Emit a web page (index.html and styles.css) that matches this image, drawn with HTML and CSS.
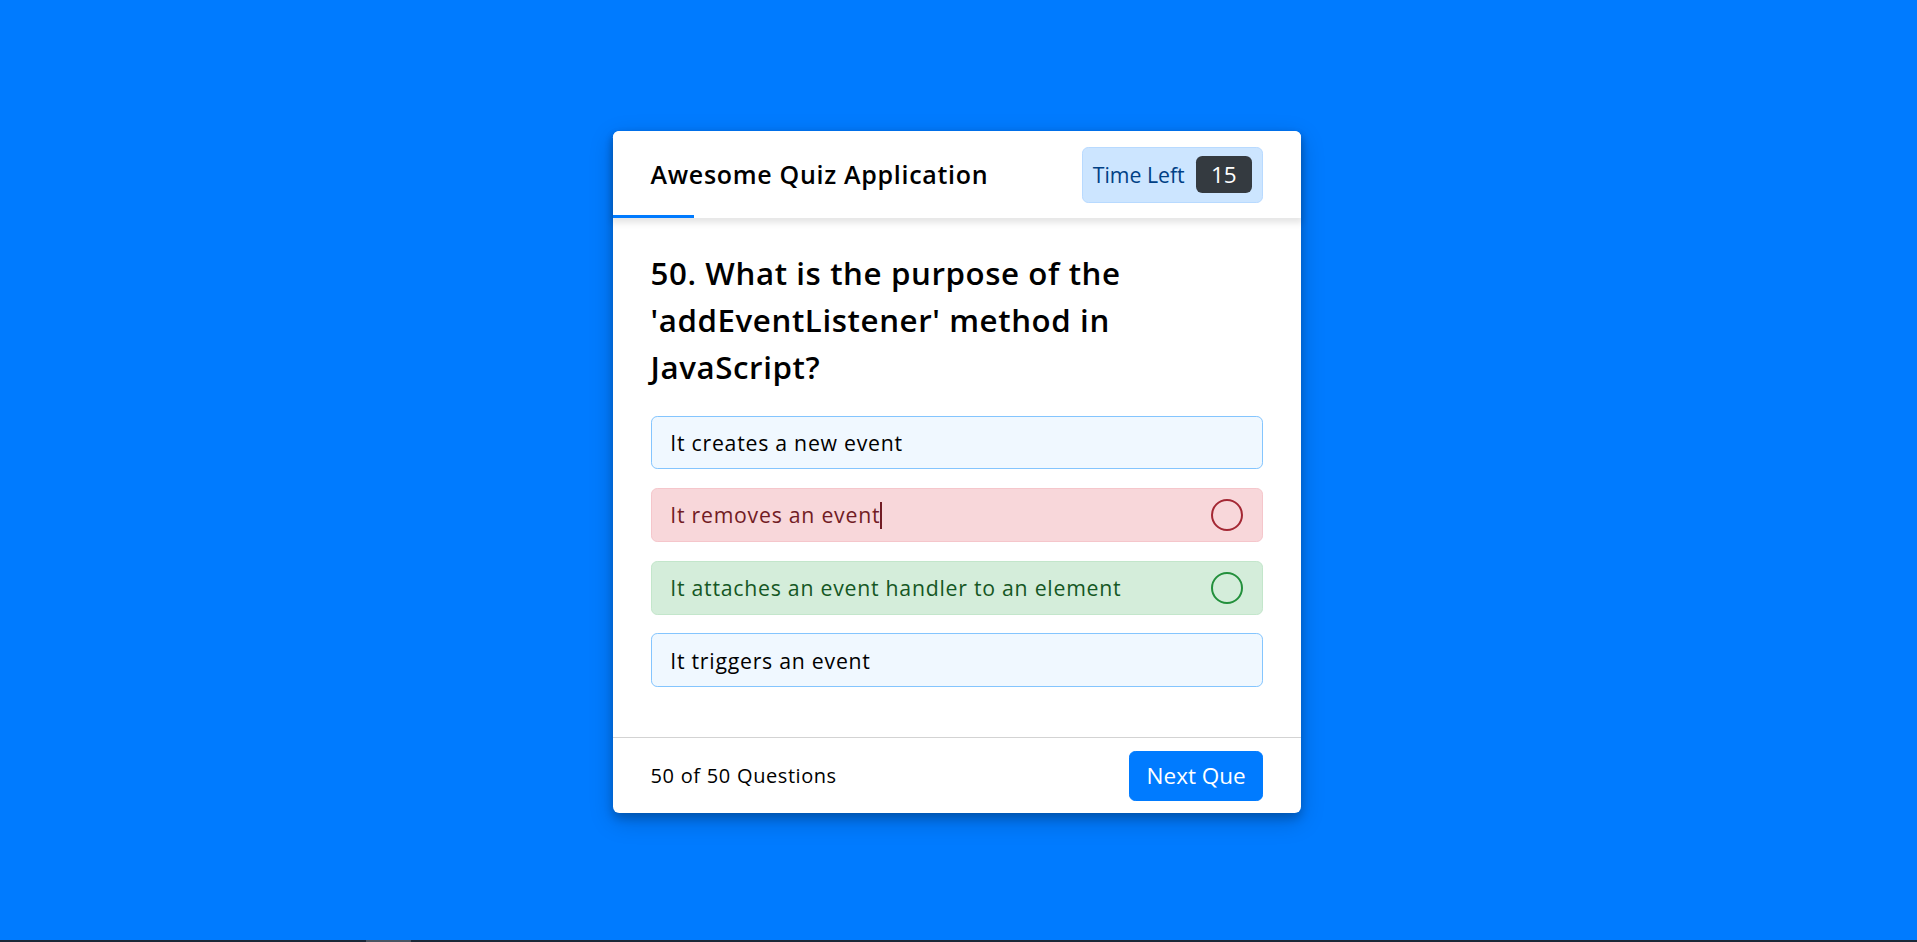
FILE: index.html
```html
<!DOCTYPE html>
<html lang="en">
<head>
<meta charset="utf-8">
<title>Awesome Quiz Application</title>
<link rel="stylesheet" href="styles.css">
</head>
<body>
<div class="quiz-box">
  <header class="quiz-header">
    <div class="title">Awesome Quiz Application</div>
    <div class="timer">
      <div class="time-left-txt">Time Left</div>
      <div class="timer-sec">15</div>
    </div>
    <div class="time-line"></div>
  </header>
  <section class="quiz-body">
    <div class="que-text">50. What is the purpose of the<br>'addEventListener' method in<br>JavaScript?</div>
    <div class="option-list">
      <div class="option"><span>It creates a new event</span></div>
      <div class="option incorrect"><span>It removes an event<span class="caret"></span></span><div class="icon cross"></div></div>
      <div class="option correct"><span>It attaches an event handler to an element</span><div class="icon tick"></div></div>
      <div class="option"><span>It triggers an event</span></div>
    </div>
  </section>
  <footer class="quiz-footer">
    <div class="total-que"><p>50</p>of<p>50</p>Questions</div>
    <button class="next-btn">Next Que</button>
  </footer>
</div>
<div class="bottom-strip"><div class="strip-thumb"></div></div>
</body>
</html>
```

FILE: styles.css
```css
* {
  box-sizing: border-box;
  margin: 0;
  padding: 0;
}

html, body {
  height: 100%;
}

body {
  background: #007bff;
  font-family: "Open Sans", "Noto Sans", "DejaVu Sans", sans-serif;
  line-height: 1.5;
  color: #000;
  display: flex;
  align-items: center;
  justify-content: center;
  padding: 2px 3.5px 0 0;
  overflow: hidden;
}

.quiz-box {
  width: 687.5px;
  background: #fff;
  border-radius: 6.25px;
  box-shadow: 0 5px 10px 0 rgba(0, 0, 0, 0.2), 0 7.5px 25px 0 rgba(0, 0, 0, 0.19);
}

.quiz-header {
  position: relative;
  z-index: 2;
  height: 87.5px;
  padding: 0 37.5px;
  display: flex;
  align-items: center;
  justify-content: space-between;
  border-radius: 6.25px 6.25px 0 0;
  box-shadow: 0 3.75px 6.25px 1.25px rgba(0, 0, 0, 0.1);
  background: #fff;
}

.title {
  font-size: 25px;
  font-weight: 600;
  letter-spacing: 0.7px;
}

.timer {
  width: 181.25px;
  height: 56.25px;
  background: #cce5ff;
  border: 1.25px solid #b8daff;
  border-radius: 6.25px;
  padding: 0 10px;
  display: flex;
  align-items: center;
  justify-content: space-between;
  color: #004085;
}

.time-left-txt {
  font-size: 21.25px;
  font-weight: 400;
}

.timer-sec {
  width: 56.25px;
  height: 37.5px;
  line-height: 37.5px;
  font-size: 22.5px;
  font-weight: 500;
  text-align: center;
  color: #fff;
  background: #343a40;
  border-radius: 6.25px;
}

.time-line {
  position: absolute;
  left: 0;
  bottom: 0;
  width: 81px;
  height: 3.75px;
  background: #007bff;
}

.quiz-body {
  padding: 31.25px 37.5px 25px;
}

.que-text {
  font-size: 31.25px;
  font-weight: 600;
  line-height: 47px;
  letter-spacing: 0.6px;
}

.option-list {
  padding: 25px 0;
  display: flex;
  flex-direction: column;
  gap: 18.75px;
}

.option {
  display: flex;
  align-items: center;
  justify-content: space-between;
  background: aliceblue;
  border: 1.25px solid #84c5fe;
  border-radius: 6.25px;
  padding: 10px 18.75px;
  font-size: 21.25px;
  line-height: 31px;
  letter-spacing: 0.75px;
  min-height: 53.5px;
}

.option.incorrect {
  color: #721c24;
  background: #f8d7da;
  border-color: #f5c6cb;
}

.option.correct {
  color: #155724;
  background: #d4edda;
  border-color: #c3e6cb;
}

.caret {
  display: inline-block;
  width: 2px;
  height: 27px;
  background: #721c24;
  vertical-align: -6px;
}

.icon {
  width: 32px;
  height: 32px;
  border-radius: 50%;
  border: 2.5px solid transparent;
}

.icon.cross {
  border-color: #a42834;
  background: #f8d7da;
}

.icon.tick {
  border-color: #23903c;
  background: #d4edda;
}

.quiz-footer {
  height: 76.25px;
  padding: 0 37.5px;
  border-top: 1.25px solid lightgrey;
  display: flex;
  align-items: center;
  justify-content: space-between;
}

.total-que {
  display: flex;
  font-size: 20px;
  letter-spacing: 0.55px;
}

.total-que p {
  font-weight: 500;
  padding: 0 6.25px;
}

.total-que p:first-child {
  padding-left: 0;
}

.next-btn {
  height: 50px;
  padding: 0 16.25px;
  font-family: inherit;
  font-size: 22.5px;
  font-weight: 400;
  color: #fff;
  background: #007bff;
  border: 1.25px solid #007bff;
  border-radius: 6.25px;
  cursor: pointer;
}

.bottom-strip {
  position: fixed;
  left: 0;
  right: 0;
  bottom: 0;
  height: 2px;
  background: #1b2838;
  display: flex;
}

.strip-thumb {
  margin-left: 366px;
  width: 45px;
  background: #4a5462;
}
```
